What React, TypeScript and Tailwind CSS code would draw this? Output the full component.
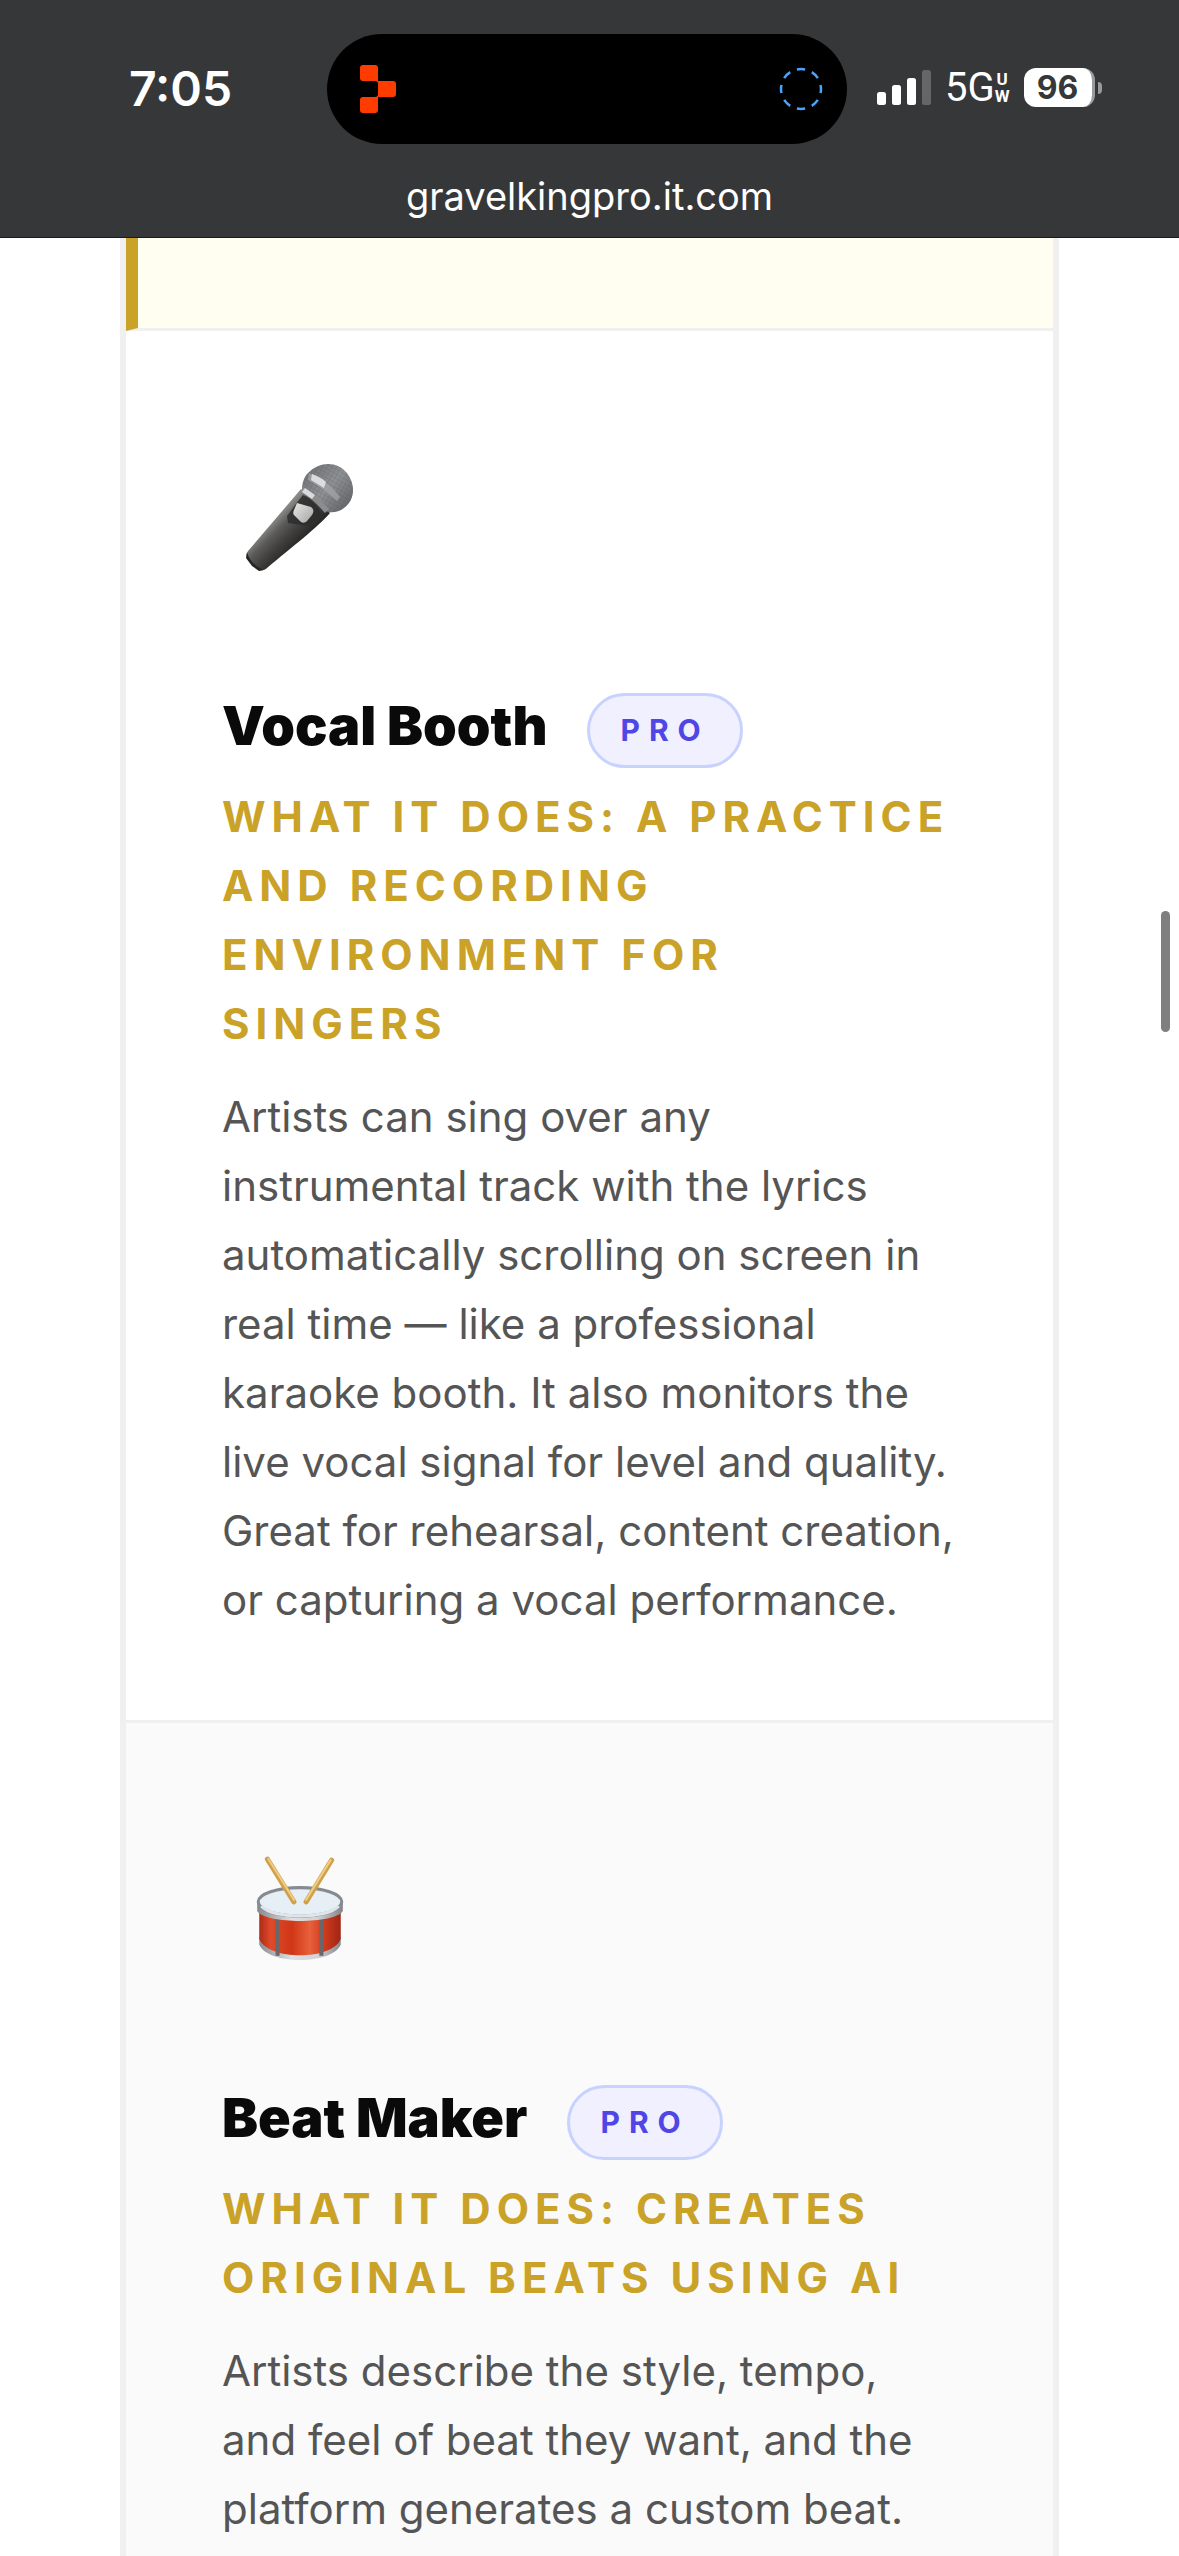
import type { ReactNode } from 'react';

interface Feature {
  title: string;
  summary: string;
  description: string;
  icon: ReactNode;
}

function MicrophoneIcon() {
  return (
    <svg className="w-[108px] h-[108px]" viewBox="0 0 108 108" fill="none" aria-hidden="true">
      <defs>
        <linearGradient id="mic-body" x1="26" y1="58" x2="50" y2="82" gradientUnits="userSpaceOnUse">
          <stop stopColor="#8a8a89" />
          <stop offset="0.3" stopColor="#5c5b59" />
          <stop offset="0.65" stopColor="#403f3d" />
          <stop offset="1" stopColor="#2a2928" />
        </linearGradient>
        <linearGradient id="mic-head" x1="62" y1="8" x2="100" y2="44" gradientUnits="userSpaceOnUse">
          <stop stopColor="#737577" />
          <stop offset="0.5" stopColor="#8f9294" />
          <stop offset="1" stopColor="#66686b" />
        </linearGradient>
        <linearGradient id="mic-switch" x1="49" y1="42" x2="66" y2="58" gradientUnits="userSpaceOnUse">
          <stop stopColor="#e2e2e2" />
          <stop offset="1" stopColor="#a9a9a9" />
        </linearGradient>
        <pattern id="mic-mesh" width="4" height="4" patternUnits="userSpaceOnUse" patternTransform="rotate(30)">
          <path d="M0 0H4M0 0V4" stroke="#55585b" strokeWidth="1" />
        </pattern>
      </defs>
      <path d="M55 26L84 50C72 64 46 84 21 105C18 108 13 108 10 105L2 97C0 94 0 91 2 88Z" fill="url(#mic-body)" />
      <path d="M1 89C3 97 9 104 18 107L13 108L6 103L0 95Z" fill="#252423" />
      <path d="M62 10C74 -2 91 -2 101 10C110 22 109 37 98 45C93 49 87 50 82 49L56 27C56 20 58 14 62 10Z" fill="url(#mic-head)" />
      <path d="M62 10C74 -2 91 -2 101 10C110 22 109 37 98 45C93 49 87 50 82 49L56 27C56 20 58 14 62 10Z" fill="url(#mic-mesh)" opacity="0.4" />
      <path d="M63 10C75 15 86 23 94 34L91 38C81 29 72 22 62 17Z" fill="#a5a8aa" opacity="0.7" />
      <path d="M66 11C72 13 77 16 80 19L78 25L65 17Z" fill="#dadcde" />
      <path d="M57 24C66 29 75 37 83 46L79 50C71 41 64 34 55 29Z" fill="#8b8d90" />
      <path d="M59 25L69 32L66 36L56 29Z" fill="#d9dadb" />
      <path d="M53 37L57 32C66 36 73 44 76 52L62 63L42 60L41 53Z" fill="#2d2d2d" opacity="0.85" />
      <path d="M51 40L65 44C68 46 68 49 66 52L61 58C59 60 57 60 55 59L48 52C47 51 47 49 48 47Z" fill="url(#mic-switch)" />
    </svg>
  );
}

function DrumIcon() {
  return (
    <svg className="w-[88px] h-[108px]" viewBox="0 0 86 106" fill="none" aria-hidden="true">
      <defs>
        <linearGradient id="drum-body" x1="3" y1="0" x2="83" y2="0" gradientUnits="userSpaceOnUse">
          <stop stopColor="#ad2a16" />
          <stop offset="0.14" stopColor="#e04a2a" />
          <stop offset="0.4" stopColor="#cf3716" />
          <stop offset="0.62" stopColor="#e8603c" />
          <stop offset="0.8" stopColor="#cf3a1d" />
          <stop offset="1" stopColor="#9f2614" />
        </linearGradient>
        <linearGradient id="drum-rim" x1="1" y1="0" x2="85" y2="0" gradientUnits="userSpaceOnUse">
          <stop stopColor="#84888c" />
          <stop offset="0.4" stopColor="#dde1e4" />
          <stop offset="0.7" stopColor="#d0d4d7" />
          <stop offset="1" stopColor="#808488" />
        </linearGradient>
      </defs>
      <path d="M3 80C11 101 75 101 83 80V88C74 108 12 108 3 88Z" fill="url(#drum-rim)" />
      <path d="M3 50H83V82C76 104 10 104 3 82Z" fill="url(#drum-body)" />
      <path d="M21 60V99M64 60V99" stroke="#6b6668" strokeWidth="4" />
      <path d="M1 46V55C8 68 78 68 85 55V46Z" fill="url(#drum-rim)" />
      <ellipse cx="43" cy="46" rx="41" ry="14" fill="#e6eff5" stroke="#858b91" strokeWidth="3" />
      <path d="M5 50C16 63 70 63 81 50" stroke="#dfe5e9" strokeWidth="3" />
      <path d="M11 4L37 46" stroke="#d0a14c" strokeWidth="5" strokeLinecap="round" />
      <path d="M12 4L37 44" stroke="#efcd81" strokeWidth="2" strokeLinecap="round" />
      <path d="M74 5L49 46" stroke="#d0a14c" strokeWidth="5" strokeLinecap="round" />
      <path d="M73 5L49 44" stroke="#efcd81" strokeWidth="2" strokeLinecap="round" />
    </svg>
  );
}

const features: Feature[] = [
  {
    title: 'Vocal Booth',
    summary: 'What it does: A practice and recording environment for singers',
    description:
      'Artists can sing over any instrumental track with the lyrics automatically scrolling on screen in real time — like a professional karaoke booth. It also monitors the live vocal signal for level and quality. Great for rehearsal, content creation, or capturing a vocal performance.',
    icon: <MicrophoneIcon />,
  },
  {
    title: 'Beat Maker',
    summary: 'What it does: Creates original beats using AI',
    description:
      'Artists describe the style, tempo, and feel of beat they want, and the platform generates a custom beat.',
    icon: <DrumIcon />,
  },
];

function StatusBar() {
  return (
    <div className="grid grid-cols-[327px_520px_1fr] items-center pt-[34px]">
      <time className="pl-[129px] text-[48px] leading-[110px] font-semibold">7:05</time>

      {/* Dynamic island */}
      <div className="flex h-[110px] items-center justify-between rounded-full bg-black pr-6 pl-[33px]">
        <svg className="w-9 h-12" viewBox="0 0 36 48" fill="#ff3c00" aria-hidden="true">
          <path d="M3 0H15Q18 0 18 3V16H33Q36 16 36 19V29Q36 32 33 32H18V45Q18 48 15 48H3Q0 48 0 45V35Q0 32 3 32H15Q18 32 18 29V19Q18 16 15 16H3Q0 16 0 13V3Q0 0 3 0Z" />
        </svg>
        <svg className="w-11 h-11" viewBox="0 0 44 44" fill="none" aria-hidden="true">
          <circle cx="22" cy="22" r="20" stroke="#4ba3fb" strokeWidth="2.5" pathLength="80" strokeDasharray="5.4 4.6" strokeDashoffset="2.7" />
        </svg>
      </div>

      <div className="flex items-center pb-[3px] pl-[29px]">
        <svg className="w-[56px] h-9" viewBox="0 0 56 36" fill="white" aria-hidden="true">
          <rect x="1" y="22" width="9" height="13" rx="2.5" />
          <rect x="16" y="15" width="9" height="20" rx="2.5" />
          <rect x="31" y="8" width="9" height="27" rx="2.5" />
          <rect x="46" y="0" width="9" height="35" rx="2.5" fillOpacity="0.24" />
        </svg>
        <span className="ml-[13px] font-['Roboto',sans-serif] text-[40px] leading-10">5G</span>
        <span className="flex flex-col items-center font-['Roboto',sans-serif] text-[17px] leading-[17px] font-bold">
          <span>U</span>
          <span>W</span>
        </span>
        <span className="ml-[14px] flex h-[39px] w-[71px] items-center justify-center rounded-xl border-r-3 border-[#9a9b9c] bg-white text-[32px] font-bold text-[#363739]">
          96
        </span>
        <span className="ml-[3px] h-3 w-1 rounded-r-full bg-[#98999a]" />
      </div>
    </div>
  );
}

function FeatureCard({ feature }: { feature: Feature }) {
  return (
    <section className="border-b-3 border-[#f0f0f0] px-24 pt-[108px] pb-[86px] even:bg-[#fafafa] last:grow last:border-b-0 last:pb-3">
      <div className="flex size-[156px] items-center justify-center">{feature.icon}</div>
      <div className="mt-[98px] flex items-start gap-10">
        <h2 className="text-[54px] leading-[66px] font-black text-[#0a0a0a]">{feature.title}</h2>
        <span className="rounded-full border-3 border-[#c7d2fe] bg-[#f0f0ff] px-[30px] text-[30px] leading-[69px] font-bold tracking-[9px] text-[#4f46e5]">
          PRO
        </span>
      </div>
      <p className="mt-[14px] text-[42px] leading-[69px] font-bold tracking-[6px] text-[#c9a227] uppercase">
        {feature.summary}
      </p>
      <p className="mt-6 text-[42px] leading-[69px] text-[#555555]">{feature.description}</p>
    </section>
  );
}

export default function App() {
  return (
    <div className="relative flex min-h-screen flex-col bg-white font-['Inter',sans-serif]">
      <header className="flex h-[238px] shrink-0 flex-col border-b border-[#18191a] bg-[#363739] text-white">
        <StatusBar />
        <p className="mt-7 text-center text-[38px] leading-[48px]">gravelkingpro.it.com</p>
      </header>

      <main className="mx-[120px] flex grow flex-col border-x-6 border-[#f0f0f0]">
        <div className="h-[93px] shrink-0 border-b-3 border-l-12 border-b-[#f0f0f0] border-l-[#c9a227] bg-[#fffef0]" />
        <div className="flex grow flex-col">
          {features.map((feature) => (
            <FeatureCard key={feature.title} feature={feature} />
          ))}
        </div>
      </main>

      {/* Scroll indicator */}
      <div className="absolute top-[911px] right-[9px] h-[121px] w-[9px] rounded-full bg-[#7f7f7f]" />
    </div>
  );
}
